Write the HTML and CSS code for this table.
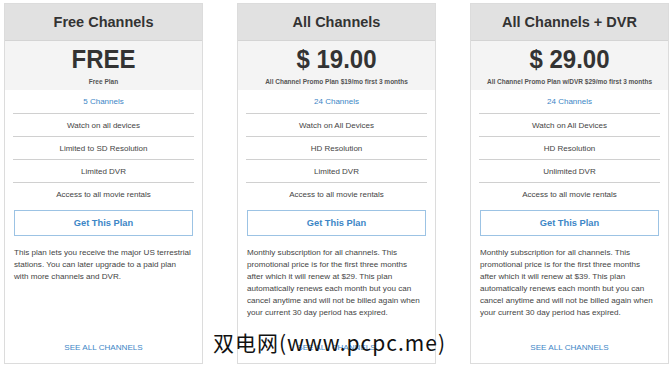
FILE: index.html
```html
<!DOCTYPE html>
<html lang="en">
<head>
    <meta charset="UTF-8">
    <meta name="viewport" content="width=device-width, initial-scale=1.0">
    <title>Plans</title>
    <link rel="stylesheet" href="styles.css">
</head>
<body>
    <div class="plans">
        <div class="plan">
            <div class="plan-header">Free Channels</div>
            <div class="plan-price">
                <div class="price">FREE</div>
                <div class="price-note">Free Plan</div>
            </div>
            <ul class="features">
                <li class="channels">5 Channels</li>
                <li>Watch on all devices</li>
                <li>Limited to SD Resolution</li>
                <li>Limited DVR</li>
                <li>Access to all movie rentals</li>
            </ul>
            <button class="plan-button">Get This Plan</button>
            <p class="plan-desc">This plan lets you receive the major US terrestrial<br>stations. You can later upgrade to a paid plan<br>with more channels and DVR.</p>
            <a class="plan-link" href="#">SEE ALL CHANNELS</a>
        </div>

        <div class="plan">
            <div class="plan-header">All Channels</div>
            <div class="plan-price">
                <div class="price">$ 19.00</div>
                <div class="price-note">All Channel Promo Plan $19/mo first 3 months</div>
            </div>
            <ul class="features">
                <li class="channels">24 Channels</li>
                <li>Watch on All Devices</li>
                <li>HD Resolution</li>
                <li>Limited DVR</li>
                <li>Access to all movie rentals</li>
            </ul>
            <button class="plan-button">Get This Plan</button>
            <p class="plan-desc">Monthly subscription for all channels. This<br>promotional price is for the first three months<br>after which it will renew at $29. This plan<br>automatically renews each month but you can<br>cancel anytime and will not be billed again when<br>your current 30 day period has expired.</p>
            <a class="plan-link" href="#">SEE ALL CHANNELS</a>
        </div>

        <div class="plan">
            <div class="plan-header">All Channels + DVR</div>
            <div class="plan-price">
                <div class="price">$ 29.00</div>
                <div class="price-note">All Channel Promo Plan w/DVR $29/mo first 3 months</div>
            </div>
            <ul class="features">
                <li class="channels">24 Channels</li>
                <li>Watch on All Devices</li>
                <li>HD Resolution</li>
                <li>Unlimited DVR</li>
                <li>Access to all movie rentals</li>
            </ul>
            <button class="plan-button">Get This Plan</button>
            <p class="plan-desc">Monthly subscription for all channels. This<br>promotional price is for the first three months<br>after which it will renew at $39. This plan<br>automatically renews each month but you can<br>cancel anytime and will not be billed again when<br>your current 30 day period has expired.</p>
            <a class="plan-link" href="#">SEE ALL CHANNELS</a>
        </div>
    </div>

    <div class="watermark">双电网(www.pcpc.me)</div>
</body>
</html>
```

FILE: styles.css
```css
/* Reset and base styles */
* {
    margin: 0;
    padding: 0;
    box-sizing: border-box;
}

body {
    font-family: "Liberation Sans", Arial, sans-serif;
    background-color: white;
    color: #444;
    position: relative;
    width: 670px;
    height: 365px;
    overflow: hidden;
}

/* Plan grid */
.plans {
    display: flex;
    gap: 34px;
    padding: 3px 0 0 4px;
}

.plan {
    width: 199px;
    height: 361px;
    border: 1px solid #dcdcdc;
    display: flex;
    flex-direction: column;
}

.plan-header {
    height: 37px;
    background-color: #e1e1e1;
    border-bottom: 1px solid #d4d4d4;
    display: flex;
    align-items: center;
    justify-content: center;
    font-size: 14.5px;
    font-weight: bold;
    color: #333;
}

.plan-price {
    height: 49px;
    background-color: #f4f4f4;
    text-align: center;
    padding-top: 3px;
}

.price {
    font-size: 24px;
    font-weight: bold;
    color: #333;
    line-height: 30px;
    transform: scaleY(1.1);
}

.price-note {
    font-size: 6.5px;
    font-weight: bold;
    color: #555;
    margin-top: 4px;
}

/* Feature list */
.features {
    list-style: none;
    margin: 0 8px;
}

.features li {
    height: 23px;
    display: flex;
    align-items: center;
    justify-content: center;
    font-size: 8px;
    color: #444;
    border-bottom: 1px solid #d0d0d0;
}

.features li.channels {
    height: 24px;
    color: #3d86c6;
}

.features li:last-child {
    border-bottom: none;
}

/* Button */
.plan-button {
    margin: 4px 9px 0 9px;
    height: 26px;
    background-color: white;
    border: 1px solid #9cc3e4;
    color: #3d86c6;
    font-family: "Liberation Sans", Arial, sans-serif;
    font-size: 9.3px;
    font-weight: bold;
}

.plan-desc {
    flex: 1;
    margin: 11px 6px 0 9px;
    font-size: 8.1px;
    line-height: 12px;
    color: #444;
    white-space: nowrap;
}

.plan-link {
    text-align: center;
    font-size: 8.1px;
    color: #3d86c6;
    text-decoration: none;
    padding-bottom: 11px;
}

/* Watermark over the page */
.watermark {
    position: absolute;
    left: 213px;
    top: 327px;
    font-family: "Noto Sans CJK SC", sans-serif;
    font-size: 21px;
    letter-spacing: 1px;
    color: #111;
}
```
